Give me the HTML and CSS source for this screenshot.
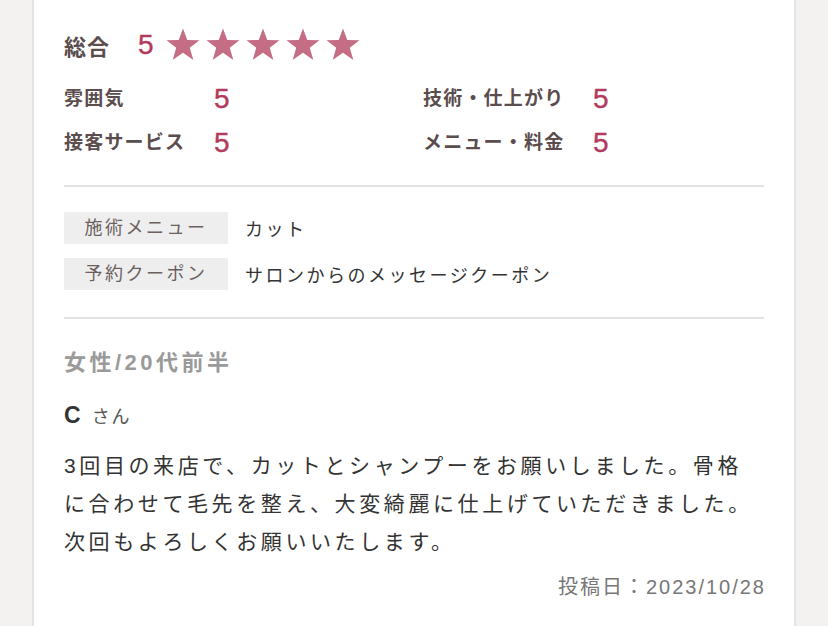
FILE: index.html
```html
<!DOCTYPE html>
<html lang="ja">
<head>
<meta charset="utf-8">
<link rel="stylesheet" href="styles.css">
</head>
<body>
<div class="card">
  <div class="total">
    <span class="total-label">総合</span>
    <span class="total-score">5</span>
    <span class="stars">
      <svg class="star" viewBox="0 0 34 34"><polygon points="17,0.5 21.3,12 33.5,12.3 23.8,19.7 27.3,32 17,24.8 6.7,32 10.2,19.7 0.5,12.3 12.7,12"/></svg>
      <svg class="star" viewBox="0 0 34 34"><polygon points="17,0.5 21.3,12 33.5,12.3 23.8,19.7 27.3,32 17,24.8 6.7,32 10.2,19.7 0.5,12.3 12.7,12"/></svg>
      <svg class="star" viewBox="0 0 34 34"><polygon points="17,0.5 21.3,12 33.5,12.3 23.8,19.7 27.3,32 17,24.8 6.7,32 10.2,19.7 0.5,12.3 12.7,12"/></svg>
      <svg class="star" viewBox="0 0 34 34"><polygon points="17,0.5 21.3,12 33.5,12.3 23.8,19.7 27.3,32 17,24.8 6.7,32 10.2,19.7 0.5,12.3 12.7,12"/></svg>
      <svg class="star" viewBox="0 0 34 34"><polygon points="17,0.5 21.3,12 33.5,12.3 23.8,19.7 27.3,32 17,24.8 6.7,32 10.2,19.7 0.5,12.3 12.7,12"/></svg>
    </span>
  </div>
  <div class="scores">
    <span class="s-label">雰囲気</span><span class="s-val">5</span>
    <span class="s-label">技術・仕上がり</span><span class="s-val">5</span>
    <span class="s-label">接客サービス</span><span class="s-val">5</span>
    <span class="s-label">メニュー・料金</span><span class="s-val">5</span>
  </div>
  <hr class="divider">
  <div class="info">
    <div class="info-row"><span class="info-label">施術メニュー</span><span class="info-val">カット</span></div>
    <div class="info-row"><span class="info-label">予約クーポン</span><span class="info-val">サロンからのメッセージクーポン</span></div>
  </div>
  <hr class="divider">
  <div class="attr">女性/20代前半</div>
  <div class="name"><span class="name-init">C</span><span class="name-san">さん</span></div>
  <p class="body">3回目の来店で、カットとシャンプーをお願いしました。骨格に合わせて毛先を整え、大変綺麗に仕上げていただきました。次回もよろしくお願いいたします。</p>
  <div class="date">投稿日：2023/10/28</div>
</div>
</body>
</html>
```

FILE: styles.css
```css
html, body {
  margin: 0;
  padding: 0;
  background: #f3f2f0;
  font-family: "Liberation Sans", "Noto Sans CJK JP", sans-serif;
}

.card {
  margin: 0 32px;
  background: #fff;
  border-left: 2px solid #e4e4e4;
  border-right: 2px solid #e4e4e4;
  padding: 25px 30px 30px;
  min-height: 600px;
}

.total {
  display: flex;
  align-items: center;
  height: 40px;
}

.total-label {
  font-size: 22px;
  font-weight: bold;
  color: #5b4d4e;
  width: 74px;
  letter-spacing: 1px;
}

.total-score {
  font-size: 28px;
  color: #b23a5c;
  width: 28px;
  -webkit-text-stroke: 0.4px #b23a5c;
}

.stars {
  display: flex;
  gap: 6px;
}

.star {
  width: 34px;
  height: 34px;
  fill: #c56d84;
  display: block;
}

.scores {
  display: grid;
  grid-template-columns: 150px 209px 170px 1fr;
  row-gap: 4px;
  margin-top: 14px;
}

.s-label {
  font-size: 19px;
  font-weight: bold;
  color: #5b4d4e;
  line-height: 40px;
  letter-spacing: 1.2px;
}

.s-val {
  font-size: 28px;
  color: #b23a5c;
  line-height: 40px;
  -webkit-text-stroke: 0.4px #b23a5c;
}

.divider {
  border: 0;
  height: 2px;
  background: #e2e2e2;
  margin: 22px 0 0;
}

.info {
  display: flex;
  flex-direction: column;
  gap: 14px;
  margin: 25px 0 27px;
}

.info-row {
  display: flex;
  align-items: center;
  height: 32px;
}

.info-label {
  width: 164px;
  height: 32px;
  line-height: 32px;
  background: #eeeeee;
  text-align: center;
  font-size: 18px;
  letter-spacing: 2.5px;
  color: #6b5f60;
}

.info-val {
  margin-left: 17px;
  font-size: 18px;
  letter-spacing: 2.5px;
  color: #333;
}

.info + .divider {
  margin-top: 0;
}

.attr {
  margin-top: 29px;
  line-height: 30px;
  font-size: 22px;
  font-weight: bold;
  color: #9a9a9a;
  letter-spacing: 3.5px;
}

.name {
  margin-top: 22px;
  line-height: 30px;
  display: flex;
  align-items: baseline;
}

.name-init {
  font-size: 23px;
  font-weight: bold;
  color: #333;
  margin-right: 11px;
}

.name-san {
  font-size: 18px;
  letter-spacing: 2px;
  color: #555;
}

.body {
  margin: 15px 0 0;
  font-size: 21px;
  line-height: 38px;
  letter-spacing: 3.6px;
  color: #333;
}

.date {
  margin-top: 11px;
  line-height: 30px;
  text-align: right;
  font-size: 20px;
  letter-spacing: 2px;
  margin-right: -2px;
  color: #777;
}
```
